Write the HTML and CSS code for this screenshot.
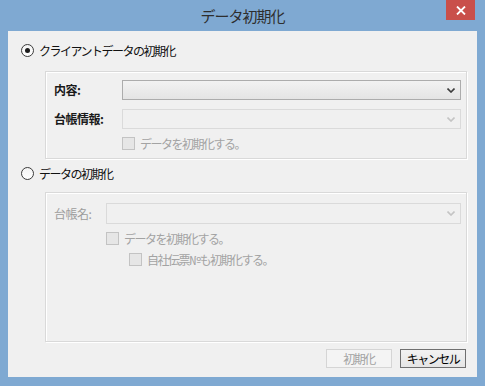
FILE: index.html
```html
<!DOCTYPE html>
<html lang="ja">
<head>
    <meta charset="UTF-8">
    <title>データ初期化</title>
    <link rel="stylesheet" href="styles.css">
</head>
<body>
    <div class="window">
        <div class="titlebar">
            <span class="title">データ初期化</span>
            <span class="close">
                <svg width="10" height="9" viewBox="0 0 10 9"><path d="M1 0.5 L9 8.5 M9 0.5 L1 8.5" stroke="#fff" stroke-width="1.8"/></svg>
            </span>
        </div>

        <div class="client">
            <!-- client data -->
            <label class="radio-row">
                <span class="radio checked"></span>
                <span>クライアントデータの初期化</span>
            </label>
            <div class="group group-one">
                <span class="field-label strong">内容:</span>
                <div class="combo">
                    <svg class="chev" width="8" height="5" viewBox="0 0 8 5"><path d="M0.5 0.5 L4 4 L7.5 0.5" fill="none" stroke="#3c3c3c" stroke-width="1.6"/></svg>
                </div>
                <span class="field-label strong">台帳情報:</span>
                <div class="combo disabled">
                    <svg class="chev" width="8" height="5" viewBox="0 0 8 5"><path d="M0.5 0.5 L4 4 L7.5 0.5" fill="none" stroke="#c4c4c4" stroke-width="1.6"/></svg>
                </div>
                <span></span>
                <label class="check-row">
                    <span class="check"></span>
                    <span>データを初期化する。</span>
                </label>
            </div>

            <!-- ledger data -->
            <label class="radio-row second">
                <span class="radio"></span>
                <span>データの初期化</span>
            </label>
            <div class="group group-two">
                <div class="ledger-row">
                    <span class="field-label muted">台帳名:</span>
                    <div class="combo disabled">
                        <svg class="chev" width="8" height="5" viewBox="0 0 8 5"><path d="M0.5 0.5 L4 4 L7.5 0.5" fill="none" stroke="#c4c4c4" stroke-width="1.6"/></svg>
                    </div>
                </div>
                <label class="check-row sub1">
                    <span class="check"></span>
                    <span>データを初期化する。</span>
                </label>
                <label class="check-row sub2">
                    <span class="check"></span>
                    <span>自社伝票№も初期化する。</span>
                </label>
            </div>

            <div class="buttons">
                <button class="btn" disabled>初期化</button>
                <button class="btn default">キャンセル</button>
            </div>
        </div>
    </div>
</body>
</html>
```

FILE: styles.css
```css
/* Dialog frame */
body {
    margin: 0;
    width: 485px;
    height: 386px;
    overflow: hidden;
    font-family: "Noto Sans CJK JP", "Noto Sans", sans-serif;
    font-size: 12px;
    letter-spacing: -1.5px;
    color: #000;
}

.window {
    height: 386px;
    box-sizing: border-box;
    background: #7fa9d2;
    padding: 0 8px 9px 8px;
    display: flex;
    flex-direction: column;
}

.titlebar {
    position: relative;
    height: 31px;
    display: flex;
    align-items: center;
    justify-content: center;
}

.title {
    font-size: 15px;
    letter-spacing: -1px;
    color: #2e2e2e;
    margin-top: -1px;
}

.close {
    position: absolute;
    top: 0;
    right: 2px;
    width: 29px;
    height: 20px;
    background: #c94f4a;
    display: flex;
    align-items: center;
    justify-content: center;
}

.client {
    flex: 1;
    background: #f0f0f0;
    padding: 13px 11px 0 13px;
    display: flex;
    flex-direction: column;
}

/* Radio buttons */
.radio-row {
    display: flex;
    align-items: center;
    gap: 5px;
    height: 13px;
    line-height: 13px;
    color: #111;
}

.radio-row.second {
    margin-top: 8px;
}

.radio {
    width: 11px;
    height: 11px;
    border: 1px solid #3b3b3b;
    border-radius: 50%;
    background: linear-gradient(#f4f4f4, #ffffff);
    display: flex;
    align-items: center;
    justify-content: center;
}

.radio.checked::after {
    content: "";
    width: 5px;
    height: 5px;
    border-radius: 50%;
    background: #1c1c1c;
}

/* Group boxes */
.group {
    margin-left: 24px;
    margin-right: -1px;
    box-sizing: border-box;
    border: 1px solid #d9d9d9;
    box-shadow: inset 1px 1px 0 #fff, 1px 1px 0 #fff;
}

.group-one {
    margin-top: 14px;
    height: 88px;
    padding: 8px 5px 0 8px;
    display: grid;
    grid-template-columns: 68px 1fr;
    grid-template-rows: 20px 20px 13px;
    row-gap: 9px;
    align-items: center;
}

.group-one .check-row {
    margin-top: -2px;
}

.group-two {
    margin-top: 12px;
    height: 150px;
    padding: 10px 5px 0 8px;
}

.ledger-row {
    display: grid;
    grid-template-columns: 52px 1fr;
    align-items: center;
    height: 21px;
}

.field-label {
    line-height: 14px;
    letter-spacing: -0.5px;
}

.field-label.strong {
    font-weight: 700;
    color: #1a1a1a;
}

.field-label.muted {
    color: #9d9d9d;
}

/* Combo boxes */
.combo {
    height: 20px;
    box-sizing: border-box;
    border: 1px solid #acacac;
    background: linear-gradient(#f2f2f2, #e4e4e4);
    display: flex;
    align-items: center;
    justify-content: flex-end;
    padding-right: 5px;
}

.ledger-row .combo {
    height: 21px;
}

.combo.disabled {
    border-color: #dadada;
    background: #f0f0f0;
}

/* Check boxes */
.check-row {
    display: flex;
    align-items: center;
    gap: 5px;
    height: 13px;
    color: #a3a3a3;
}

.check {
    width: 11px;
    height: 11px;
    border: 1px solid #c3c3c3;
    background: #e6e6e6;
}

.sub1 {
    margin-top: 8px;
    margin-left: 52px;
}

.sub2 {
    margin-top: 8px;
    margin-left: 75px;
}

/* Buttons */
.buttons {
    margin-top: 7px;
    display: flex;
    justify-content: flex-end;
    gap: 8px;
}

.btn {
    width: 66px;
    height: 19px;
    padding: 0;
    font-family: inherit;
    font-size: 12px;
    letter-spacing: -1.5px;
    line-height: 17px;
    border: 1px solid #adadad;
    background: linear-gradient(#f2f2f2, #e5e5e5);
    color: #000;
}

.btn:disabled {
    border-color: #d5d5d5;
    background: #f4f4f4;
    color: #a3a3a3;
}

.btn.default {
    border-color: #6f6f6f;
}
```
